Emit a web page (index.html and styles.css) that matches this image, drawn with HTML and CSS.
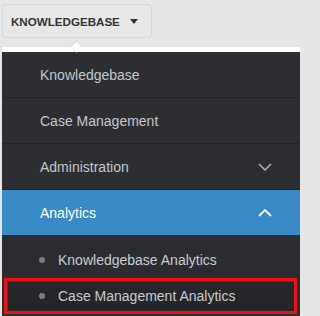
FILE: index.html
```html
<!DOCTYPE html>
<html>
<head>
<meta charset="utf-8">
<link rel="stylesheet" href="styles.css">
</head>
<body>
<div class="top">
  <div class="btn"><span class="btn-label">KNOWLEDGEBASE</span><span class="caret"></span></div>
</div>
<div class="panel">
  <span class="notch"></span>
  <div class="item">Knowledgebase</div>
  <div class="item">Case Management</div>
  <div class="item">
    <span>Administration</span>
    <svg class="chev" width="14" height="8" viewBox="0 0 14 8"><polyline points="1,1 7,7 13,1" fill="none" stroke="#a9acb2" stroke-width="1.6"/></svg>
  </div>
  <div class="item active">
    <span>Analytics</span>
    <svg class="chev" width="14" height="8" viewBox="0 0 14 8"><polyline points="1,7 7,1 13,7" fill="none" stroke="#ffffff" stroke-width="1.8"/></svg>
  </div>
  <div class="sub">
    <div class="sub-item"><span class="dot"></span><span>Knowledgebase Analytics</span></div>
    <div class="sub-item selected"><span class="dot"></span><span>Case Management Analytics</span></div>
  </div>
</div>
</body>
</html>
```
FILE: styles.css
```css
html, body {
  margin: 0;
  padding: 0;
}
body {
  width: 300px;
  height: 316px;
  overflow: hidden;
  background: #e6e6e6;
  font-family: "Liberation Sans", Arial, sans-serif;
}
.top {
  padding: 4px 0 0 2px;
}
.btn {
  display: inline-flex;
  align-items: center;
  box-sizing: border-box;
  height: 34px;
  padding: 0 13px 0 8px;
  border: 1px solid #d6d6d6;
  border-radius: 4px;
  gap: 10px;
  background: #e7e7e7;
}
.btn-label {
  font-size: 11.6px;
  font-weight: bold;
  color: #333;
}
.caret {
  width: 0;
  height: 0;
  border-left: 4.5px solid transparent;
  border-right: 4.5px solid transparent;
  border-top: 5px solid #333;
}
.panel {
  position: relative;
  margin: 9px 0 0 2px;
  border-top: 5px solid #ffffff;
  background: #2d2e32;
  height: 264px;
}
.notch {
  position: absolute;
  top: -10px;
  left: 70px;
  width: 8px;
  height: 8px;
  background: #fff;
  border-top: 1px solid #cfcfcf;
  border-left: 1px solid #cfcfcf;
  transform: rotate(45deg);
}
.item {
  display: flex;
  align-items: center;
  justify-content: space-between;
  height: 45px;
  padding: 0 28px 0 38px;
  border-bottom: 1px solid #232427;
  font-size: 14px;
  color: #c4c8cf;
}
.item.active {
  background: #3a8ac5;
  color: #ffffff;
  border-bottom: 0;
}
.sub {
  padding-top: 7px;
  background: #2b2c30;
}
.sub-item {
  display: flex;
  align-items: center;
  gap: 13px;
  box-sizing: border-box;
  height: 36px;
  margin: 0 3px 0 2px;
  padding-left: 32px;
  border: 3px solid transparent;
  font-size: 14px;
  color: #c8ccd2;
}
.sub-item.selected {
  border-color: #ee1111;
  background: #25262a;
  box-shadow: inset 1px 1px 0 #3c3d42;
}
.dot {
  width: 6px;
  height: 6px;
  border-radius: 50%;
  background: #7c7d80;
}
```
